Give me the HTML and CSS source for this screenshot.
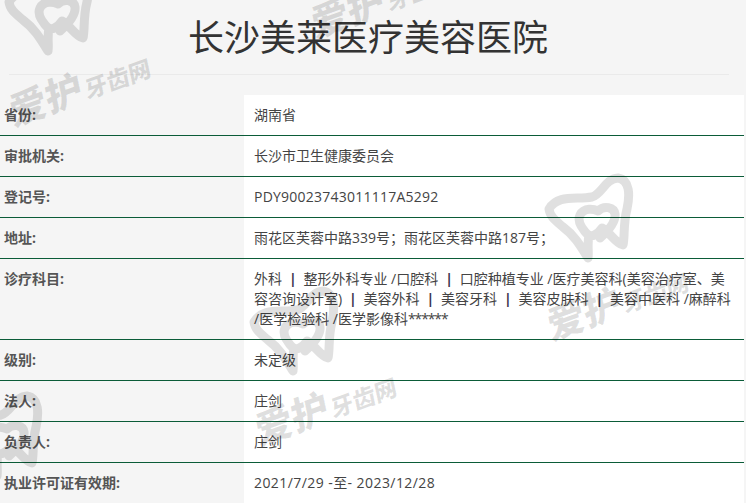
FILE: index.html
```html
<!DOCTYPE html>
<html lang="zh-CN">
<head>
<meta charset="utf-8">
<title>长沙美莱医疗美容医院</title>
<link rel="stylesheet" href="styles.css">
</head>
<body>
<svg width="0" height="0" class="defs" aria-hidden="true">
  <symbol id="tooth" viewBox="0 0 110 110">
    <path d="M19 44C28 29 46 35 62 32C72 29 75 14 88 13C100 15 100 30 97 44C93 59 95 72 93 80C85 78 79 66 72 63C67 70 62 72 59 70C57 80 59 86 58 93C50 80 44 70 33 62C26 56 20 52 19 44Z M59 71C52 64 47 56 50 50C54 42 64 44 68 46C74 40 84 42 85 49C86 57 78 66 70 73" fill="none" stroke="currentColor" stroke-width="9" stroke-linejoin="round" stroke-linecap="round"/>
  </symbol>
</svg>
<main class="page">
  <header class="head"><h1 class="title">长沙美莱医疗美容医院</h1></header>
  <section class="rows">
    <div class="row"><div class="label">省份:</div><div class="value">湖南省</div></div>
    <div class="row"><div class="label">审批机关:</div><div class="value">长沙市卫生健康委员会</div></div>
    <div class="row"><div class="label">登记号:</div><div class="value code">PDY90023743011117A5292</div></div>
    <div class="row"><div class="label">地址:</div><div class="value">雨花区芙蓉中路339号；雨花区芙蓉中路187号；</div></div>
    <div class="row"><div class="label">诊疗科目:</div><div class="value">外科 <b class="sep">&nbsp;|&nbsp;</b> 整形外科专业 /口腔科 <b class="sep">&nbsp;|&nbsp;</b> 口腔种植专业 /医疗美容科(美容治疗室、美容咨询设计室) <b class="sep">&nbsp;|&nbsp;</b> 美容外科 <b class="sep">&nbsp;|&nbsp;</b> 美容牙科 <b class="sep">&nbsp;|&nbsp;</b> 美容皮肤科 <b class="sep">&nbsp;|&nbsp;</b> 美容中医科 /麻醉科 /医学检验科 /医学影像科<span class="stars">******</span></div></div>
    <div class="row"><div class="label">级别:</div><div class="value">未定级</div></div>
    <div class="row"><div class="label">法人:</div><div class="value">庄剑</div></div>
    <div class="row"><div class="label">负责人:</div><div class="value">庄剑</div></div>
    <div class="row"><div class="label">执业许可证有效期:</div><div class="value date">2021/7/29 -至- 2023/12/28</div></div>
  </section>
</main>
<div class="marks" aria-hidden="true">
  <svg class="tooth t1"><use href="#tooth"/></svg>
  <svg class="tooth t2"><use href="#tooth"/></svg>
  <svg class="tooth t3"><use href="#tooth"/></svg>
  <svg class="tooth t4"><use href="#tooth"/></svg>
  <div class="brand b1"><span class="big">爱护</span><span class="small">牙齿网</span></div>
  <div class="brand b2"><span class="big">爱护</span><span class="small">牙齿网</span></div>
  <div class="brand b3"><span class="big">爱护</span><span class="small">牙齿网</span></div>
  <div class="brand b4"><span class="big">爱护</span><span class="small">牙齿网</span></div>
</div>
</body>
</html>
```
FILE: styles.css
```css
html, body {
  margin: 0;
  height: 503px;
  overflow: hidden;
  background: #f5f5f5;
}
body {
  position: relative;
  font-family: "Open Sans", "Noto Sans CJK SC", sans-serif;
  font-size: 14px;
  line-height: 20px;
  color: #444;
}
.defs { position: absolute; }
.page { width: 744px; }
.head {
  margin: 0 15px 20px 9px;
  height: 74px;
  border-bottom: 1px solid #eaeaea;
}
.title {
  margin: 0;
  padding: 15px 2px 0 0;
  font-size: 36px;
  line-height: 46px;
  font-weight: 400;
  text-align: center;
  color: #333;
}
.row {
  display: grid;
  grid-template-columns: 244px 1fr;
  border-bottom: 1px solid #0b5c38;
}
.row:last-child { border-bottom: 0; }
.label {
  padding: 10px 0 10px 4px;
  font-weight: 700;
  color: #555;
}
.value {
  padding: 10px;
  background: #fff;
}
.code { letter-spacing: .23px; }
.date { letter-spacing: .43px; }
.stars { letter-spacing: -1.1px; }
.sep { font-weight: 700; color: #3c3350; margin: 0 -.4px; }
.marks {
  position: absolute;
  inset: 0;
  pointer-events: none;
  color: rgba(0, 0, 0, .12);
}
.tooth {
  position: absolute;
  width: 110px;
  height: 110px;
}
.t1 { left: -10px; top: -42px; }
.t2 { left: 530px; top: 165px; }
.t3 { left: 235px; top: 278px; }
.t4 { left: -61px; top: 383px; }
.brand {
  position: absolute;
  white-space: nowrap;
  font-family: "Noto Sans CJK SC", sans-serif;
  font-weight: 900;
  transform: rotate(-20deg) skewX(-8deg);
  transform-origin: left bottom;
  line-height: 40px;
}
.big { font-size: 38px; }
.small { font-size: 23px; font-weight: 900; margin-left: 3px; }
.b1 { left: 16px; top: 90px; }
.b2 { left: 262px; top: 409px; }
.b3 { left: 554px; top: 304px; }
.b4 { left: 318px; top: 2px; }
```
